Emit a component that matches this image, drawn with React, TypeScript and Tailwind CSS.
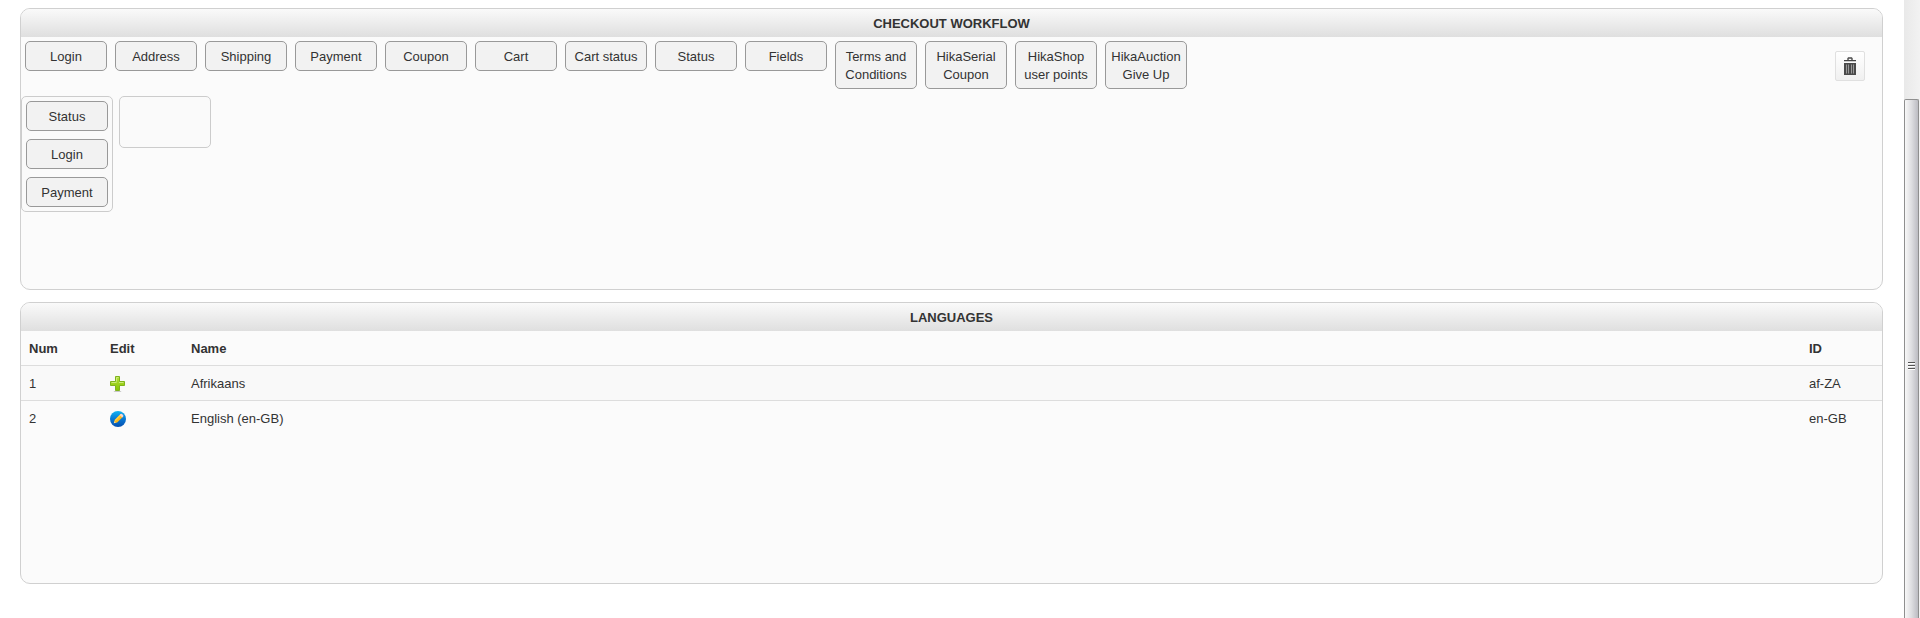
import { useState } from "react";

const availableSteps = [
  "Login",
  "Address",
  "Shipping",
  "Payment",
  "Coupon",
  "Cart",
  "Cart status",
  "Status",
  "Fields",
  "Terms and Conditions",
  "HikaSerial Coupon",
  "HikaShop user points",
  "HikaAuction Give Up",
];

const languages = [
  { num: 1, name: "Afrikaans", id: "af-ZA", installed: false },
  { num: 2, name: "English (en-GB)", id: "en-GB", installed: true },
];

const PlusIcon = () => (
  <svg width="16" height="16" viewBox="0 0 16 16" aria-hidden="true">
    <defs>
      <linearGradient id="plus-fill" x1="0" y1="0" x2="0" y2="1">
        <stop offset="0" stopColor="#b5e03c" />
        <stop offset="1" stopColor="#86c400" />
      </linearGradient>
    </defs>
    <ellipse cx="7.5" cy="15.4" rx="4" ry="0.6" fill="#c8c8c8" />
    <path d="M5.500.5h4v5h5v4h-5v5h-4v-5h-5v-4h5z" fill="url(#plus-fill)" stroke="#7fb31c" />
    <path d="M6.500 5.500v-4h2M1.500 6.500h5M9 6.500h4.500" fill="none" stroke="#cdea7c" />
  </svg>
);

const EditIcon = () => (
  <svg width="16" height="16" viewBox="0 0 16 16" aria-hidden="true">
    <defs>
      <linearGradient id="edit-fill" x1="0" y1="0" x2="0" y2="1">
        <stop offset="0" stopColor="#12b4f2" />
        <stop offset="0.5" stopColor="#0878d4" />
        <stop offset="1" stopColor="#064fae" />
      </linearGradient>
    </defs>
    <circle cx="8" cy="8" r="8" fill="url(#edit-fill)" />
    <path d="M3.800 12.200l.9-3.200 6-6 2.500 2.500-6 6z" fill="#fbb81c" />
    <path d="M4.700 9l6-6 1 1-6.200 6.200z" fill="#ffcf45" />
    <path d="M9.700 4l1-1q.8-.6 1.600.2l.7.7q.8.800.2 1.600l-1 1z" fill="#f8d3cf" />
    <path d="M3.800 12.200l.6-2 1.400 1.400z" fill="#f7dfa8" />
  </svg>
);

const TrashIcon = () => (
  <svg width="12" height="18" viewBox="0 0 12 18" aria-hidden="true">
    <path d="M4 3.500V1.500L4.500 1h3l.5.500v2" fill="none" stroke="#4a4a4a" strokeWidth="1.400" />
    <path d="M0 3h12v1.300H0z" fill="#444" />
    <path d="M0 6h12v12H0z" fill="#4a4a4a" />
    <path d="M2 7.500h1v9H2zM4 7.500h1v9H4zM7 7.500h1v9H7zM9 7.500h1v9H9z" fill="#999" />
  </svg>
);

const Step = ({ name }: { name: string }) => (
  <button
    type="button"
    draggable
    onDragStart={(e) => e.dataTransfer.setData("step", name)}
    className="w-[82px] cursor-move rounded-[5px] border border-[#999] bg-[#f2f2f2] pt-[6px] pb-1 text-center leading-[18px]"
  >
    {name}
  </button>
);

const Panel = ({ title, children }: { title: string; children: React.ReactNode }) => (
  <section className="min-h-[282px] overflow-hidden rounded-[10px] border border-[#d0d0d0] bg-[#fbfbfb]">
    <h2 className="bg-linear-to-b from-[#fafafa] to-[#dfdfdf] pt-[6px] pb-1 text-center leading-[18px] font-bold uppercase">
      {title}
    </h2>
    {children}
  </section>
);

const CheckoutWorkflow = () => {
  const [columns, setColumns] = useState<string[][]>([["Status", "Login", "Payment"], []]);

  const handleDrop = (e: React.DragEvent, index: number) => {
    e.preventDefault();
    const step = e.dataTransfer.getData("step");
    if (step) {
      setColumns(columns.map((steps, i) => (i === index ? [...steps, step] : steps)));
    }
  };

  return (
    <Panel title="Checkout workflow">
      <div className="flex items-start justify-between pt-1 pr-[17px] pl-1">
        <div className="flex flex-wrap items-start gap-2">
          {availableSteps.map((name) => (
            <Step key={name} name={name} />
          ))}
        </div>
        <button
          type="button"
          aria-label="Delete"
          className="mt-[10px] flex size-[30px] shrink-0 items-center justify-center rounded-xs border border-[#e0e0e0] bg-linear-to-b from-white to-[#f0f0f0]"
        >
          <TrashIcon />
        </button>
      </div>
      <div className="mt-[7px] flex items-start gap-[6px]">
        {columns.map((steps, index) => (
          <div
            key={index}
            onDragOver={(e) => e.preventDefault()}
            onDrop={(e) => handleDrop(e, index)}
            className="flex min-h-[52px] w-[92px] flex-col gap-2 rounded-[5px] border border-[#ccc] bg-[#fafafa] p-1"
          >
            {steps.map((name, i) => (
              <Step key={i} name={name} />
            ))}
          </div>
        ))}
      </div>
    </Panel>
  );
};

const Languages = () => (
  <Panel title="Languages">
    <table className="w-full table-fixed text-left leading-[18px]">
      <thead>
        <tr>
          <th className="w-[81px] px-2 pt-[9px] pb-[7px]">Num</th>
          <th className="w-[81px] px-2 pt-[9px] pb-[7px]">Edit</th>
          <th className="px-2 pt-[9px] pb-[7px]">Name</th>
          <th className="w-[81px] px-2 pt-[9px] pb-[7px]">ID</th>
        </tr>
      </thead>
      <tbody>
        {languages.map((language) => (
          <tr key={language.id} className="border-t border-[#ddd] odd:bg-[#f9f9f9]">
            <td className="px-2 pt-[9px] pb-[7px]">{language.num}</td>
            <td className="px-2 pt-[9px] pb-[7px]">
              <a href="#" aria-label={language.name} className="block w-4">
                {language.installed ? <EditIcon /> : <PlusIcon />}
              </a>
            </td>
            <td className="px-2 pt-[9px] pb-[7px]">{language.name}</td>
            <td className="px-2 pt-[9px] pb-[7px]">{language.id}</td>
          </tr>
        ))}
      </tbody>
    </table>
  </Panel>
);

const Scrollbar = () => (
  <div className="flex w-4 shrink-0 flex-col bg-linear-to-r from-[#e9e9e9] to-[#f2f2f2] pt-[99px]">
    <div className="mr-px flex grow flex-col rounded-t-xs border border-b-0 border-[#8f8f8f] bg-linear-to-r from-[#f8f8f8] via-[#dedee1] to-[#bcbcc2] pt-[262px] pl-[3px]">
      <div className="flex flex-col gap-px">
        <div className="h-[2px] w-[7px] border-b border-white bg-[#555]" />
        <div className="h-[2px] w-[7px] border-b border-white bg-[#555]" />
        <div className="h-[2px] w-[7px] border-b border-white bg-[#555]" />
      </div>
    </div>
  </div>
);

export default function App() {
  return (
    <div className="flex min-h-screen bg-white font-['Liberation_Sans',Arial,sans-serif] text-[13px] text-[#333]">
      <main className="flex min-w-0 grow flex-col gap-3 pt-2 pr-[21px] pb-5 pl-5">
        <CheckoutWorkflow />
        <Languages />
      </main>
      <Scrollbar />
    </div>
  );
}
